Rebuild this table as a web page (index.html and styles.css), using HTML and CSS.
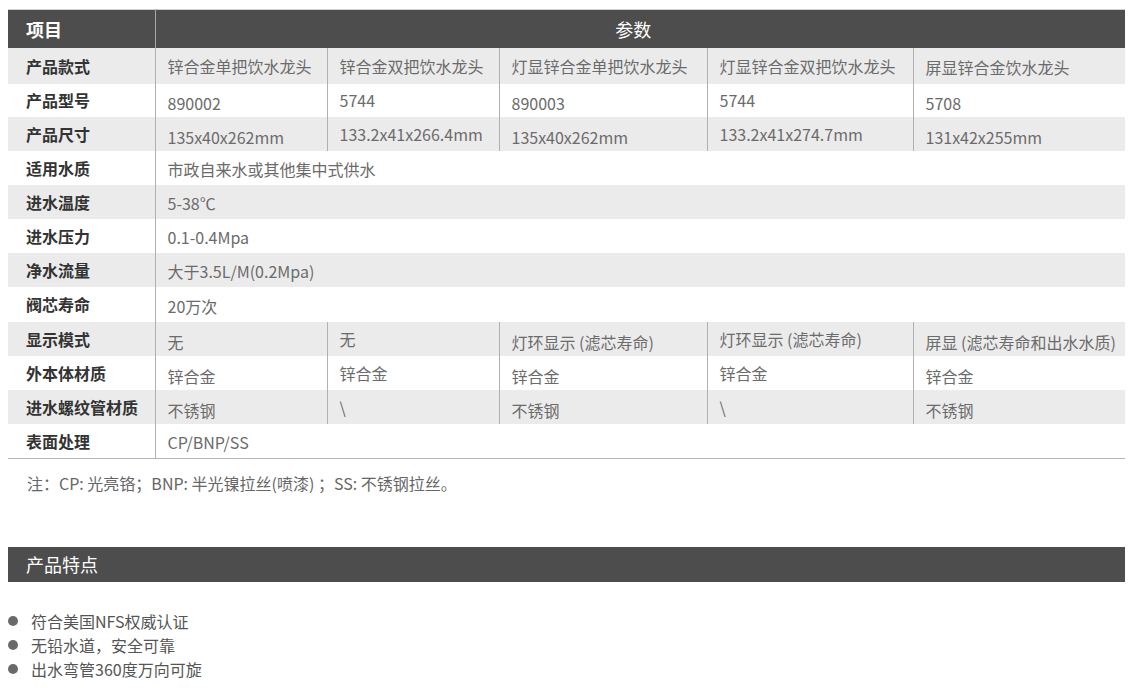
FILE: index.html
```html
<!DOCTYPE html>
<html lang="zh-CN">
<head>
<meta charset="utf-8">
<title>产品参数</title>
<link rel="stylesheet" href="styles.css">
</head>
<body>
<div class="page">
  <table class="spec">
    <colgroup>
      <col class="c0"><col class="c1"><col class="c2"><col class="c3"><col class="c4"><col class="c5">
    </colgroup>
    <thead>
      <tr class="head">
        <th class="lab">项目</th>
        <th colspan="5" class="param">参数</th>
      </tr>
    </thead>
    <tbody>
      <tr class="g r1">
        <th class="lab">产品款式</th>
        <td>锌合金单把饮水龙头</td><td>锌合金双把饮水龙头</td><td>灯显锌合金单把饮水龙头</td><td>灯显锌合金双把饮水龙头</td><td class="lo1">屏显锌合金饮水龙头</td>
      </tr>
      <tr class="r2">
        <th class="lab">产品型号</th>
        <td class="lo">890002</td><td>5744</td><td class="lo">890003</td><td>5744</td><td class="lo">5708</td>
      </tr>
      <tr class="g">
        <th class="lab">产品尺寸</th>
        <td class="lo">135x40x262mm</td><td>133.2x41x266.4mm</td><td class="lo">135x40x262mm</td><td>133.2x41x274.7mm</td><td class="lo">131x42x255mm</td>
      </tr>
      <tr>
        <th class="lab">适用水质</th>
        <td colspan="5" class="span">市政自来水或其他集中式供水</td>
      </tr>
      <tr class="g">
        <th class="lab">进水温度</th>
        <td colspan="5" class="span">5-38℃</td>
      </tr>
      <tr>
        <th class="lab">进水压力</th>
        <td colspan="5" class="span">0.1-0.4Mpa</td>
      </tr>
      <tr class="g">
        <th class="lab">净水流量</th>
        <td colspan="5" class="span">大于3.5L/M(0.2Mpa)</td>
      </tr>
      <tr class="tall">
        <th class="lab">阀芯寿命</th>
        <td colspan="5" class="span">20万次</td>
      </tr>
      <tr class="g">
        <th class="lab">显示模式</th>
        <td class="lo">无</td><td>无</td><td class="lo">灯环显示 (滤芯寿命)</td><td>灯环显示 (滤芯寿命)</td><td class="lo">屏显 (滤芯寿命和出水水质)</td>
      </tr>
      <tr>
        <th class="lab">外本体材质</th>
        <td class="lo">锌合金</td><td>锌合金</td><td class="lo">锌合金</td><td>锌合金</td><td class="lo">锌合金</td>
      </tr>
      <tr class="g">
        <th class="lab">进水螺纹管材质</th>
        <td class="lo">不锈钢</td><td>\</td><td class="lo">不锈钢</td><td>\</td><td class="lo">不锈钢</td>
      </tr>
      <tr class="tall">
        <th class="lab">表面处理</th>
        <td colspan="5" class="span">CP/BNP/SS</td>
      </tr>
    </tbody>
  </table>

  <p class="note">注：CP: 光亮铬；BNP: 半光镍拉丝(喷漆) ；SS: 不锈钢拉丝。</p>

  <div class="section-bar">产品特点</div>

  <ul class="features">
    <li>符合美国NFS权威认证</li>
    <li>无铅水道，安全可靠</li>
    <li>出水弯管360度万向可旋</li>
  </ul>
</div>
</body>
</html>
```

FILE: styles.css
```css
html, body {
  margin: 0;
  padding: 0;
  background: #ffffff;
}

body {
  font-family: "Noto Sans CJK SC", "Noto Sans", sans-serif;
  color: #666666;
}

.page {
  width: 1117px;
  padding: 9px 11px 0 8px;
}

.spec {
  width: 1117px;
  table-layout: fixed;
  border-collapse: collapse;
  border-spacing: 0;
  border-top: 1px solid #cfcfcf;
  border-bottom: 1px solid #b5b5b5;
}

.c0 { width: 147px; }
.c1 { width: 172px; }
.c2 { width: 172px; }
.c3 { width: 208px; }
.c4 { width: 206px; }
.c5 { width: 212px; }

.spec tr {
  height: 34px;
}

.spec tr.tall {
  height: 35px;
}

.spec th,
.spec td {
  padding: 0 0 0 12px;
  font-size: 16px;
  line-height: 20px;
  vertical-align: middle;
  text-align: left;
  white-space: nowrap;
  overflow: hidden;
}

.spec td {
  color: #6b6b6b;
  font-weight: 400;
  border-left: 1px solid #b0b0b0;
}

.spec td.span {
  padding-top: 3px;
}

.spec td.lo {
  padding-top: 6px;
}

.spec td.lo1 {
  padding-top: 2px;
}

.spec th.lab {
  padding-left: 18px;
  color: #333333;
  font-weight: 700;
  border-right: 1px solid #b0b0b0;
}

.spec tr.head {
  height: 38px;
}

.spec tr.head th {
  background: #4d4d4d;
  color: #ffffff;
  font-size: 18px;
  font-weight: 700;
}

.spec tr.head th.param {
  text-align: center;
  font-weight: 400;
  padding-left: 0;
  padding-right: 14px;
}

.spec tr.head th.lab {
  border-right: 1px solid #a9a9a9;
}

.spec tr.g th,
.spec tr.g td {
  background: #ebebeb;
}

.spec tr.r1 {
  height: 36px;
}

.spec tr.r2 {
  height: 33px;
}

.note {
  margin: 14px 0 0 19px;
  font-size: 16px;
  line-height: 20px;
  color: #666666;
}

.section-bar {
  margin-top: 54px;
  height: 35px;
  line-height: 35px;
  background: #4d4d4d;
  color: #ffffff;
  font-size: 18px;
  padding-left: 18px;
}

.features {
  list-style: none;
  margin: 27px 0 0 0;
  padding: 0;
}

.features li {
  position: relative;
  padding-left: 23px;
  font-size: 16px;
  line-height: 24px;
  color: #555555;
}

.features li::before {
  content: "";
  position: absolute;
  left: 0;
  top: 7px;
  width: 10px;
  height: 10px;
  border-radius: 50%;
  background: #6a6a6a;
}
```
